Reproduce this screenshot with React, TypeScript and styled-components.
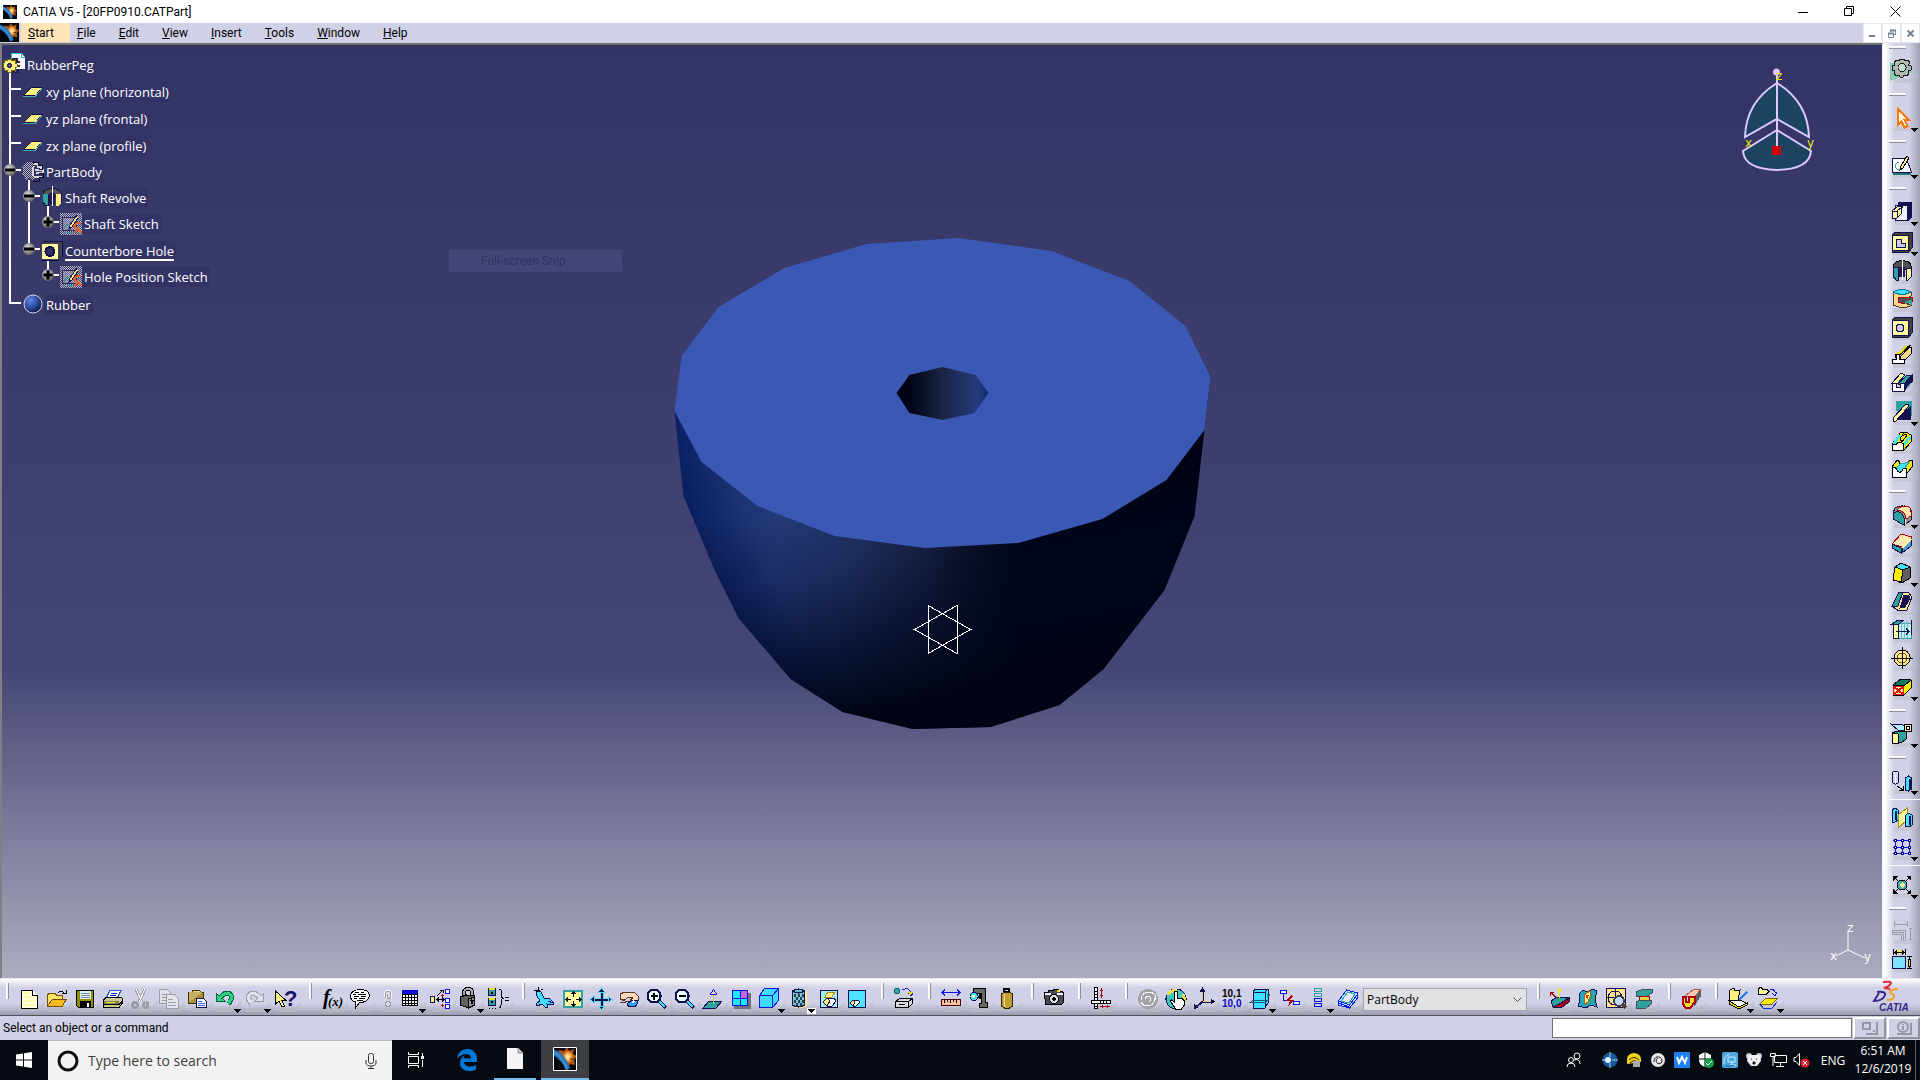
import React from 'react';
import styled, { createGlobalStyle } from 'styled-components';

const GlobalStyle = createGlobalStyle`
  *, *::before, *::after { box-sizing: border-box; }
  body { margin: 0; font-family: "Open Sans", "Noto Sans", sans-serif; font-size: 12px; color: #000; }
  button, input, select { font: inherit; color: inherit; margin: 0; }
  button { padding: 0; border: 0; background: none; cursor: default; }
  ul { list-style: none; margin: 0; padding: 0; }
  svg { display: block; }
`;

const chromeFont = 'Roboto, "Open Sans", sans-serif';

/* ---------- icon data: each layer is a path or a short label ---------- */

type PathLayer = [d: string, fill?: string, stroke?: string, width?: number];
type LabelLayer = { t: string; x: number; y: number; s: number; c: string; i?: boolean; serif?: boolean };
type Layer = PathLayer | LabelLayer;

const N = '#14104f';
const Y = '#fffa9c';
const S = '#ffee80';
const T = '#30a0a0';
const C = '#40e0ff';
const K = '#000';
const W = '#fff';
const G = '#9c9ca4';
const D = '#505050';
const R = '#a80010';
const B = '#1010e0';

const ICONS: Record<string, Layer[]> = {
  new: [['M2.5 1.5h11l5 5v13h-16z', '#ffffe0', K], ['M13.5 1.5v5h5', W, K], ['M4 4h7M4 8h12M4 12h12M4 16h12', 'none', '#fbfba8', 2]],
  open: [['M.5 17V6l2-2h5l2 2h6v4', '#ffe060', '#705000'], ['M.5 17l5-7h14l-4 7z', '#ffb820', '#705000'], ['M11 4q3-4 6 0M15 4h4V1', 'none', K]],
  save: [['M1.5 1.5h17v17h-15l-2-2z', '#909000', K], ['M5 2h11v8H5z', '#e0f0ff'], ['M6 4h9M6 6h9M6 8h9', 'none', '#7090b0'], ['M5 12h11v7H5z', K], ['M12 14h2v4h-2z', W]],
  print: [['M7 1.5h11l-4 8H3z', W, '#3060c0'], ['M8 4h6M7 6h6M6 8h6', 'none', B], ['M.5 11l3-3h15l1 2v4l-3 4H.5z', '#c8c890', K], ['M1 12h15v3H1z', '#808050'], ['M1 15.5h15l3-3', 'none', K], ['M3 13h9v1H3z', '#f0f020']],
  cut: [['M5 0l6 13M14 0L8 13', 'none', G, 3], ['M5 0l6 13M14 0L8 13', 'none', W, 1], ['M4 13.5a2.5 2.5 0 1 0 .1 0M14.5 13.5a2.5 2.5 0 1 0 .1 0', 'none', G, 3]],
  copy: [['M.5.5h8l3 3v11H.5z', '#e0e0ea', G], ['M7.5 5.5h8l4 4v10h-12z', '#e4e4ee', G], ['M3 5h4M3 8h4M3 11h4M9 10h5M9 13h8M9 16h8', 'none', G]],
  paste: [['M1.5 3.5h15v11h-15z', '#a88c40', '#403000'], ['M5 4.5V2l2-1h4l2 1v2.5z', '#e8e080', '#403000'], ['M2 13l13-9v-1H2z', '#c8b060'], ['M9.5 9.5h7l3 3v6h-10z', W, N], ['M11 12h4M11 14h7M11 16h7', 'none', '#3060e0']],
  undo: [['M5 9q5-7 10-4 4 4-2 10', 'none', '#006840', 5], ['M1.5 4.500v8h9z', '#30d080', '#006840'], ['M5 9q5-7 10-4 4 4-2 9', 'none', '#30d080', 3]],
  redo: [['M15 9q-5-7-10-4-4 4 2 10', 'none', G, 5], ['M18.5 4.500v8h-9z', '#e0e0ee', G], ['M15 9q-5-7-10-4-4 4 2 9', 'none', '#e0e0ee', 3]],
  help: [['M.5 2v13l3.5-3 3 6 2.5-1-3-6h4z', S, K], { t: '?', x: 9, y: 17, s: 22, c: '#18106c' }],
  fx: [{ t: 'f', x: 1, y: 15, s: 21, c: K, i: true, serif: true }, { t: '(x)', x: 6, y: 17, s: 13, c: K, i: true, serif: true }],
  comment: [['M10 .5q9 0 9.500 6q-1 7-10 7l-4 5.500v-6q-5-1-5-6q.5-6 9.500-6.500z', W, K], ['M5 3h4M11 3h3M3 5h3M8 5h8M4 7h5M11 7h5M4 9h3M9 9h6M7 11h6', 'none', K]],
  link: [['M7.5 8V4q3-4 5 0v4h-3V5', 'none', W, 3], ['M7.5 9V3.5q2.500-3 5 0V9h-3V6M10 12.5a2.500 2.500 0 1 0 .1 0', '#d8d8e8', G, 1]],
  table: [['M2 1h16v5H2z', '#0808d8'], ['M2.5 5.5h15v11h-15z', W, K], ['M2 8.5h16M2 11.5h16M2 14.5h16M5.5 6v11M8.5 6v11M11.5 6v11M14.5 6v11', 'none', K]],
  relations: [['M.5 7.5h4v6h-4z', S, N], ['M15.5.5h4v4h-4zM15.5 9.5h4v4h-4zM15.5 15.5h4v4h-4z', W, B], ['M7 7l6-6m-3 0h3v3M7 10.5h7m-2-2l2 2-2 2M9 8.5l-2 2 2 2', 'none', K], ['M11 6.5h3M12.5 5v3M11 16.5h3M12.5 15v3', 'none', R]],
  lock: [['M6 8V3q1-3.5 4-3.500 4 .5 4 3.500v5', 'none', K, 4], ['M6 8V3q1-3 4-3 4 0 4 3v5', 'none', '#b0b0b0', 2], ['M2.5 8l6-2 8 1v9l-6 3-8-3z', '#606060', K], ['M10.5 10l6-2v8l-6 3z', '#989898', K], ['M12.5 11l2 1-1 3', 'none', K, 2]],
  braces: [['M.5-.5h7v7h-7zM.5 9h7v7h-7z', T, N], ['M1 0h6M1 9.5h6', 'none', '#e8e800', 2], ['M3 3h2v2H3zM3 12h2v2H3z', K], ['M11 0q3 0 2 4v4l2 1.500-2 1.500v5q0 3-2 3M17 8h4M17 11h4M1 19h1M4 19h1M7 19h1', 'none', K]],
  fly: [['M1 2l5 1 3 6 6 1 4 4-1 2-6-1 1 3-2 1-4-4-5 2-1-2 4-3-3-5z', C, N], ['M-1 1h6M3-2v4M6 1l2-1', 'none', K], ['M13 12l5 2', 'none', B]],
  fit: [['M1 2h18v16H1z', Y, T, 2], ['M10.5 3v5m-2-3l2-2 2 2M10.5 17v-5m-2 3l2 2 2-2M3 10.5h5M5 8.500l-2 2 2 2M18 10.500h-5M16 8.500l2 2-2 2', 'none', K, 1]],
  pan: [['M10.5 1v18M1 10.500h18', 'none', '#60d8f0', 4], ['M10.5 1v18M1 10.500h18', 'none', N, 2], ['M10.500-1l3.500 4H7zM10.500 21l3.500-4H7zM-1 10.500l4-3.500v7zM21 10.500l-4-3.500v7z', N, '#60d8f0']],
  rotate: [['M1 5l5-2h9l4 4v5l-5 1-3-2 3-2-4-1-5 3-3-1z', '#ffd8c0', '#603020'], ['M1 10l5 2h7l3-1', 'none', '#603020'], ['M8 15l4-3 7-1q0 6-5 7-5 0-6-3z', '#30a0ff', N], ['M1 13l6 1', 'none', '#603020'], ['M13 14l2-2', 'none', W, 2]],
  zoomIn: [['M11 11l8 8', 'none', N, 4], ['M12 12l6 6', 'none', C, 2], ['M7 .5a6.5 6.5 0 1 0 .1 0z', '#e8ffff', N, 2], ['M3.5 7h7M7 3.5v7', 'none', K, 2]],
  zoomOut: [['M11 11l8 8', 'none', N, 4], ['M12 12l6 6', 'none', C, 2], ['M7 .5a6.5 6.5 0 1 0 .1 0z', '#e8ffff', N, 2], ['M3.5 7h7', 'none', K, 2]],
  normal: [['M0 19l6-7h13l-6 7z', T, N], ['M10.5 15V4', 'none', '#e8c800'], ['M7.5 5l3-4.500 3 4.500z', '#e0e0ff', B]],
  multi: [['M3 4h17v16H3z', '#70707c'], ['M1.5 1.5h15v15h-15z', '#20e8ff', B], ['M9 2h7v7H9z', '#c868d8'], ['M9 2v14M2 9h14', 'none', B]],
  iso: [['M.5 6.5l5-7h14v12l-6 7h-13z', '#40dcff', B], ['M.5 6.5h13v12M13.5 6.5l6-7', 'none', B]],
  shading: [['M6 2h12v15l-5 2H6z', '#ffe890'], ['M3.5 2q6-4 12 0v14q-6 4-12 0z', '#80c8cc', N], ['M5 5h2v3H5zM9 5h2v3H9zM13 5h2v3h-2zM7 8h2v3H7zM11 8h2v3h-2zM5 11h2v3H5zM9 11h2v3H9zM13 11h2v3h-2zM7 14h2v3H7zM11 14h2v3h-2z', '#204058'], ['M3.5 2q6 4 12 0', '#50b8c0', N]],
  hide: [['M1.5 1.5h17v17h-17z', '#a0ecf4', N], ['M6 8l3-5h7l-3 5z', S, '#b09020'], ['M4 13l4-4h7l2 3-4 5H8z', W, N], ['M4 13l4-4 3 3-3 5z', S, N]],
  swap: [['M1.5 1.5h17v17h-17z', '#50e4ff', N], ['M3 14l3-3h5l2 2-4 4H6z', W, N], ['M3 14l3-3 2 2-2 4z', S, N]],
  sceneA: [['M3-1a3 3 0 1 0 .1 0z', T, '#106070'], ['M8 1q8-4 9 5m-3-2l3 3 2-3', 'none', '#1818d0'], ['M14 3h5l-3 4z', '#e8e000'], ['M1.5 12.5l4-3h13v5l-4 4h-13z', '#d8d8e0', K], ['M1.5 12.5h13v6M14.5 12.5l4-3M5 15h6', 'none', K]],
  measure: [['M1 3.5h18M4 .5l-3 3 3 3M16 .5l3 3-3 3', 'none', B], ['M.5 10.5h19v6H.5z', '#ffc0a0', '#500000'], ['M3.5 11v3M6.5 11v2M9.5 11v3M12.5 11v2M15.5 11v3', 'none', K]],
  clamp: [['M4.5-.5h12v14h2v5h-8v-4h2v-10h-8z', '#686868', K], ['M5 3.500a4 4 0 1 0 .1 0z', C, N], ['M3 6h3v3H3z', Y], ['M9 7.500h3M11 5v5', 'none', K, 2]],
  weight: [['M7 0h5v3H7z', 'none', K, 2], ['M4.5 5l3-2h5l3 2v12l-3 2h-5l-3-2z', '#c0a030', '#302000'], ['M7 5v13', 'none', '#f0e0a0']],
  camera: [['M.5 3.5h4v-2h4l2-1h4l1 2h3l1 2v9l-2 2h-16z', '#484858', K], ['M1 4h6v2H1zM13 4h6v2h-6z', '#f0f0f8'], ['M10 5.5a4.500 4.500 0 1 0 .1 0z', '#e0e0e0', K, 1], ['M10 8a2 2 0 1 0 .1 0z', K], ['M13 1h3v2h-3z', '#e8e800']],
  scale: [['M3.5-1.500h3v21h-3z', W, K], ['M.5 11.5h19v3H.5z', W, K], ['M4 2.500h2M4 5.500h2M4 8.500h2M9.5 14v-2M12.5 14v-2M15.5 14v-2M4 17.500h2', 'none', K], ['M10.500-1v10M9 1.500h3M9 6.500h3M9 17.500h10M11.500 16v3M16.500 16v3', 'none', R]],
  swirl: [['M10 0a10 10 0 1 0 .1 0z', '#a4a4a8'], ['M3 11q1-8 8-8 8 1 7 8M17 9q-1 8-8 8-4 0-6-4M7 10q2-4 5-2 2 2-1 5', 'none', W, 1]],
  touch: [['M10 0a10 10 0 1 0 .1 0z', '#40c8c0', N], ['M2 6q4-6 9-4M17 5q4 8-2 12', 'none', '#e8e040', 3], ['M8.5 3q2-2 3 0v6l5 1 2 2v4l-3 4h-6l-5-8 1-1 3 2z', W, K]],
  axis: [['M8 12.500h12M8.500 13V0M8 13l-7 6', 'none', N, 2], ['M9 12.500h9M8.500 12V3', 'none', '#e8c860'], ['M8.500-2l3 5h-6zM21 12.500l-4 3v-6zM0 20v-5l4 4z', N]],
  precision: [{ t: '10,1', x: 0, y: 8, s: 10, c: K }, { t: '10,0', x: 0, y: 18, s: 10, c: '#0808c0' }],
  section: [['M3 2l3-2h12v14l-3 5H3z', C, N], ['M3 3h12l3-3M15 3v15', 'none', N], ['M0 13.5l3-2h15l-3 2zM17 5l3 1-3 2', 'none', '#106070']],
  update: [['M.5 1.500h6v3h-6zM13.5 12.5h6v3h-6z', '#e0f0ff', B], ['M3.500 5v6h3', 'none', B], ['M11 6l-5 6h4l-2 6 6-7h-4l3-4z', R]],
  list: [['M6.5-.5h7v3h-7zM6.5 4.5h7v3h-7z', 'none', T], ['M6.5 9.5h7v3h-7zM6.5 14.5h7v3h-7z', 'none', B]],
  catalog: [['M.5 12l8-11 11 3v5l-8 10-11-3z', '#a8f0f8', B], ['M.5 12l11 4 8-11M1 14l10 4', 'none', B], ['M3 12l7-9 7 2-6 9z', '#e4e8ff', T]],
  pad2: [['M1 12l6-4h12l-6 5-3 6-7-1z', T, N], ['M11 14l8-5v4l-8 6-8-1z', R, N], ['M0 3l7 6M0 7V3h4', 'none', R], ['M9.500 9V0M7 3l2.500-3L12 3', 'none', '#f0e800', 1]],
  draft: [['M1 5l4-4 4 2 6-3 4 2-2 8 2 8-6-2-5 3-8-2 2-6z', '#20a8c0', N], ['M6 6l6-4 1 3-3 8-4 3z', Y, '#c06000'], ['M8 6h3l-2 6z', '#e03020'], ['M14 5l-2 10M16 6v8', 'none', '#20a040']],
  inspect: [['M.5-.5h19v19H.5z', '#ffe490', N], ['M9 2a7 7 0 1 0 .1 0zM9-1v18M0 8.5h16', 'none', N], ['M13 7a5 5 0 1 0 .1 0z', '#c0d8ff', '#404050', 2], ['M16 15l4 4', 'none', '#504030', 3]],
  beam: [['M2 3l7-3h9v4l-5 3H2z', '#30a0a0', '#405050'], ['M5 7h11l-1 5H5z', '#e8d040', R], ['M2 13l4-2h11v4l-5 4H2z', '#30a0a0', '#405050']],
  wall: [['M4 7L13 0h7L13 9z', '#ffc8b0', '#a06040'], ['M17 3l3-3v7l-7 11-1-5z', '#606060'], ['M1.5 7.5h3v5h3v-5h6v6l-4 5h-5l-3-4z', '#f8e020', R, 2]],
  sketchPad: [['M2 1l4-2 1 3 5-1-2 10H1z', S, K], ['M1 11.500h12l6 3-8 4z', W, K], ['M1 12l10 6 8-4v2l-8 4-10-5z', '#f0e000', K], ['M19 3l-8 8', 'none', '#2080f0', 2]],
  convert: [['M0-.5l3-1 2 2h4l2 2-3 3H0z', Y, K], ['M12 0q6 0 5 6m-3-2l3 3 2-4', 'none', B], ['M2 15l6-6h12l-6 6z', '#f8f000', '#806000'], ['M2 15l3 4h9l5-6', 'none', '#1030d0']],
  gear: [['M-2 2l24 10L-2 21z', '#88ccb4'], ['M8-1h4l1 2 3-1 2 3-2 2 3 1v4l-3 1 1 3-3 2-2-1-1 2H8l-1-2-3 1-2-3 1-2-3-1V6l3-1-1-3 3-2 2 1z', '#b0b8b0', '#181818'], ['M10 3.500a4 4 0 1 0 .1 0z', '#c8e0d4', '#181818']],
  pointer: [['M5.5.5v17l4-4 3 6 3-1.500-3-6h5z', '#fff8e8', '#ff7800', 2]],
  sketch: [['M.5 3.5h14l5 14H.5z', W, N], ['M1 18h18v2H1z', '#207878'], ['M7 7a4 4 0 1 0 3 7', 'none', T], ['M15 1L9 11l-1 4 3-2 6-10z', S, K]],
  pad: [['M6 0h14v16l-4 3H6z', N], ['M3.5 3.5h12v15h-12z', '#f0f0ff', N], ['M0 9l6-5h5l-2 3v5l-4 4H0z', Y, N], ['M0 9h5v7M5 9l5-4', 'none', N]],
  pocket: [['M0 3l3-3h17v16l-3 4H0z', '#404040', N], ['M.5 3.5h16v15H.5z', Y, N], ['M4 7h5v4h4v4H4z', '#c8c8e8', N]],
  shaft: [['M1 5q2-6 9-5 8-1 9 5v10l-4 2V8H6v11H4L1 15z', D, K], ['M1 6h5v13H4l-3-4z', T, N], ['M14 7h5v9l-3 3h-2z', Y, N], ['M7 6h6v10H7z', '#241c58'], ['M10.5-2v21', 'none', W, 1]],
  groove: [['M1 3q9-5 18 0v4l-4 2v6l5 1q-8 5-19 0z', '#ffd890', '#503820'], ['M1 3q9-5 18 0-9 5-18 0z', C, '#107090'], ['M6 8h14v5l-7 2-7-2z', '#585050', R], ['M13 14l6-2v4', 'none', T, 2]],
  hole: [['M0 3l3-3h17v16l-3 4H0z', '#404040', N], ['M.5 3.5h16v15H.5z', Y, N], ['M8 7a4 4 0 1 0 .1 0z', '#c8c8e8', N, 1]],
  rib: [['M8 17v-5L18 2h1v7l-9 9z', '#ffd890', K], ['M3 10q7-1 9-7l7-3-10 9-3 3H3z', '#808020', K], ['M4 9l5-2 5-6', 'none', '#f0e000', 2], ['M.5 18.5v-4h4V9.500h3v5h5v4z', W, K]],
  slot: [['M0 10L9 0l4 2L6 10z', Y, N], ['M6 11l9-9h4v3l-8 7z', T, N], ['M12 18V11l8-9v7z', N, N], ['M.5 10.5h4v4h4v-4h4v8H.5z', W, N], ['M14 16l5-6', 'none', T, 1]],
  stiffener: [['M4-1h16v15L4 9z', T], ['M19 3L5 18h14z', N], ['M1 16L14 2h2l1 2L4 19H1z', Y, N]],
  loft: [['M1 12L9 1h5l5 3v7l-7 8z', '#f8f000', K], ['M2 14q2-7 8-9 2-5 5-3', 'none', K, 1], ['M1 14L8 4M12 14l6-8', 'none', C, 3], ['M8 8q2-5 7-4l-5 7z', '#f8f000', K], ['M.5 19v-6q3 2 5-1 3-2 6 1v6z', W, K]],
  removeLoft: [['M0 8l5-7 3 2-2 6z', '#f0e800', K], ['M12 9l6-8h2v7l-8 10z', '#f0e800', K], ['M4 9q4 9 9 0l4-6-4 1-5 1z', C, T], ['M.5 8.5h3q4 9 8 1h3v9H.5z', W, K]],
  fillet: [['M3 3q9-5 16 2v10l-5 4L1 14V8z', '#909090', N], ['M1 8q8-4 11 5v7L1 14z', T, N], ['M5 5q5-6 12-3 3 3 2 9l-5 3q0-8-9-9z', '#ffe8a8', R], ['M13 14v5', 'none', Y, 1]],
  chamfer: [['M10 13l9-9v8l-9 7z', '#50a0d0', N], ['M0 10L9 0l11 3-10 10z', '#ffe8b0', R], ['M0 10l9 4v5l-9-5z', T, N], ['M10 14l9-9', 'none', Y, 2]],
  draftAngle: [['M3 4l6-4 9 4v11l-8 5-8-3z', '#606060', K], ['M3 4l6-4 9 4-7 3z', C, K], ['M3 4l8 3-2 12-8-2z', '#f8f000', K]],
  shell: [['M7 0h9l4 5-5 13-8 1-6-4z', '#ffe890', N], ['M7 0h4L6 14H0z', T, N], ['M12 3h4l2 3-5 9-5 1 1-3z', '#181050', N]],
  thickness: [['M6 3.500h13v15H6z', '#c0f0f4', T], ['M0 4l6-4h6l-5 4z', T, N], ['M1 4.500h5v14H1z', Y, N], ['M9.5 2v17M12.5 2v17M15.5 1v17', 'none', '#70b8c0'], ['M19.500 0v15', 'none', N], ['M4 11.5h13m-3-3l3 3-3 3', 'none', N, 1]],
  thread: [['M10 2a8 8 0 1 0 .1 0z', '#ffe890', K], ['M10 5a5 5 0 1 0 .1 0z', 'none', '#705010'], ['M10.5-1v22M-1 10.5h22', 'none', K]],
  removeFace: [['M1 8l8-6 10 1v8l-7 7H1z', '#f8f000', K], ['M1 8l8-6 10 1-7 6z', '#107868', K], ['M1.5 9.5h10v8h-10z', Y, '#e01010', 1], ['M2 10l9 7M11 10l-9 7', 'none', '#e01010', 2]],
  assemble: [['M0 9l5-2 9 0v8l-5 4-9-2z', T, K], ['M0 9l6 1v9H0z', Y, K], ['M-1 0l12 1 6 4-10 2z', '#b0f0ff', N], ['M12.5.5h7v7h-7z', '#f8e890', K], ['M14.5 2.5h3v3h-3z', W, K]],
  translate: [['M.5 1.5q3-3 6 0v10l-3 2-3-2z', 'none', N, 1], ['M2 1v2M5 1v2M3.5 4v8', 'none', W], ['M5 15l6 4m0-4v4H7', 'none', K], ['M13.5 7l3-2 3 2v11l-3 2-3-1z', C, N], ['M18 8v11', 'none', N, 2]],
  mirror: [['M0 2l3-2 3 2v10l-3 2H0z', C, N], ['M4 3v9', 'none', N, 2], ['M6 7l9-7v12l-9 8z', Y, '#a09000'], ['M13 8l3-3 4 2v10l-3 2-4-1z', C, N], ['M18 8v9', 'none', N, 2]],
  pattern: [['M3.5 2v16M10.5 2v16M17.5 2v16M1 3.5h18M1 10.5h18M1 16.5h18', 'none', B], ['M2.5 2.5h2v2h-2zM9.5 2.5h2v2h-2zM16.5 2.5h2v2h-2zM2.5 9.5h2v2h-2zM9.5 9.5h2v2h-2zM16.5 9.5h2v2h-2zM2.5 15.5h2v2h-2zM9.5 15.5h2v2h-2zM16.5 15.5h2v2h-2z', W, '#000080']],
  scaling: [['M2 2l16 16M18 2L2 18', 'none', K], ['M1 1h5L1 6zM19 1v5l-5-5zM19 19h-5l5-5zM1 19v-5l5 5z', K], ['M10 5a5 5 0 1 0 .1 0z', '#40b0b0', K], ['M10 7l3 3-3 3-3-3z', Y]],
  constraintOff: [['M2 3.5h13M2.5 0v6M15.5 0v6M17 7.5h3M17 18.5h3M18.5 8v10', 'none', '#9c9ca4'], ['M.5 9.5h13v10M.5 11.5h11v8M.5 13.5h9v6M.5 9v5', 'none', '#9c9ca4']],
  constraint: [['M3 1h9v4H3z', '#f0e860'], ['M1 3.5h13M1.5 0v6M13.5 0v6M5 1.500l-2 2 2 2M10 1.500l2 2-2 2', 'none', K], ['M.5 7.5h13v12H.5z', '#80e0ff', N], ['M15 7.5h5M15 19.5h5M17.5 8v12', 'none', K, 1], ['M16.5 10h2v7h-2z', '#f0e860', K]],
};

const IconSvg = styled.svg`
  width: 28px;
  height: 28px;
  overflow: visible;
  shape-rendering: crispEdges;
`;

const ToolGlyph = ({ name, menu, boxed }: { name: string; menu?: boolean; boxed?: boolean }) => (
  <IconSvg viewBox="-4 -4 28 28" aria-hidden>
    <path d="M3 19h17l6-7v5l-5 6H1z" fill="url(#stipple)" />
    {ICONS[name].map((l, i) =>
      Array.isArray(l) ? (
        <path key={i} d={l[0]} fill={l[1] ?? 'none'} stroke={l[2] ?? 'none'} strokeWidth={l[3] ?? 1} />
      ) : (
        <text key={i} x={l.x} y={l.y} fontSize={l.s} fill={l.c} fontStyle={l.i ? 'italic' : 'normal'} fontWeight={700}
          fontFamily={l.serif ? '"Liberation Serif", serif' : '"Liberation Sans", sans-serif'}>{l.t}</text>
      ),
    )}
    {boxed && <path d="M18 19h9v6h-9z" fill="#fff" />}
    {menu && <path d="M19 20h7l-3.5 4z" fill="#000" />}
  </IconSvg>
);

/* ---------- window frame ---------- */

const Shell = styled.div`
  min-height: 100vh;
  display: flex;
  flex-direction: column;
  background: #d0d0e6;
`;

const TitleBar = styled.header`
  height: 23px;
  background: #fff;
  display: flex;
  align-items: center;
  padding-left: 3px;
`;

const Title = styled.h1`
  margin: 0 auto 0 6px;
  font-family: ${chromeFont};
  font-size: 12px;
  line-height: 16px;
  font-weight: 400;
`;

const WindowButton = styled.button`
  width: 46px;
  height: 20px;
  display: grid;
  place-items: center;
`;

const WindowButtons = styled.div`
  display: flex;
  padding-right: 2px;
`;

const MenuBar = styled.nav`
  height: 20px;
  display: flex;
  align-items: stretch;
`;

const MenuItems = styled.div`
  display: flex;
  margin-left: 2px;
`;

const MenuItem = styled.button<{ $active?: boolean }>`
  padding: 1px 16px 0 7px;
  height: 19px;
  font-family: ${chromeFont};
  font-size: 12px;
  line-height: 18px;
  background: ${(p) => (p.$active ? '#ffe4b8' : 'transparent')};
  &::first-letter { text-decoration: underline; }
`;

const MdiGroup = styled.div`
  margin-left: auto;
  display: flex;
  background: #e8e8f4;
  gap: 2px;
  padding: 1px 1px 0 1px;
`;

const MdiButton = styled.button`
  width: 17px;
  height: 18px;
  background: #fff;
  display: grid;
  place-items: center;
`;

const Workspace = styled.main`
  flex: 1;
  display: flex;
`;

const Viewport = styled.section`
  flex: 1;
  min-width: 0;
  position: relative;
  border-top: 2px solid #70706c;
  border-left: 2px solid #808084;
  border-right: 1px solid #f4f4fa;
  padding: 7px 0 0 0;
  background: linear-gradient(#333366 0%, #3c3c6c 33%, #464676 67%, #626289 76%, #acacc0 100%);
`;

const Scene = styled.svg`
  position: absolute;
  inset: 0;
  width: 100%;
  height: 100%;
`;

const Compass = styled.svg`
  position: absolute;
  top: 19px;
  right: 65px;
  width: 80px;
  height: 112px;
`;

const AxisTriad = styled.svg`
  position: absolute;
  right: 10px;
  bottom: 12px;
  width: 46px;
  height: 46px;
`;

const GhostItem = styled.div`
  position: absolute;
  left: 447px;
  top: 205px;
  width: 173px;
  height: 22px;
  padding-left: 32px;
  background: #444678;
  color: #303060;
  font-family: ${chromeFont};
  font-size: 12px;
  line-height: 22px;
`;

/* ---------- specification tree ---------- */

const Tree = styled.div`
  position: relative;
  width: max-content;
  color: #fff;
  font-size: 13px;
`;

const TreeRow = styled.div<{ $tall?: boolean }>`
  height: ${(p) => (p.$tall ? 27 : 26)}px;
  display: flex;
  align-items: center;
`;

const TreeIcon = styled.svg`
  width: 22px;
  height: 22px;
  margin-left: 1px;
  overflow: visible;
  shape-rendering: crispEdges;
`;

const TreeLabel = styled.span<{ $current?: boolean }>`
  padding: 0 2px;
  line-height: 20px;
  border-radius: 3px;
  background: #333366;
  text-decoration: ${(p) => (p.$current ? 'underline' : 'none')};
  text-decoration-thickness: 2px;
  text-underline-offset: 3px;
`;

const Branches = styled.ul`
  padding-bottom: 1px;
`;

const Branch = styled.li`
  display: grid;
  grid-template-columns: 19px auto;
`;

const Rail = styled.div<{ $last?: boolean }>`
  padding-top: 5px;
  padding-left: 2px;
  background-image: linear-gradient(#fff, #fff), linear-gradient(#fff, #fff);
  background-repeat: no-repeat;
  background-position: 7px 0, 8px 10px;
  background-size: 2px ${(p) => (p.$last ? '12px' : '100%')}, 11px 2px;
`;

const Toggle = styled.button`
  display: block;
  width: 12px;
  height: 12px;
`;

const treeIcons: Record<string, React.ReactNode> = {
  plane: (<><path d="M1.5 14.5l8-8h11l-7 8z" fill="#ffee80" stroke="#141040" /><path d="M1 15.5h12l7-8" fill="none" stroke="#40b0a8" /></>),
  body: (<>
    <path d="M9 1h5l1 3h5v4h-2v3h3v4h-4l-2 4h-5l-2-2-3 2-2-4-2-2 1-4-1-3 3-2 1-3z" fill="#30305c" />
    <path d="M9 1h3v18H9l-2-2-3 2-2-4-2-2 1-4-1-3 3-2 1-3z" fill="url(#dots)" />
    <path d="M12 3h4v3h3v2M13 9h8v3h-7M12 16h7v-1M12 5q-3 5 0 11" stroke="#d8d8e0" strokeWidth="2" fill="none" />
    <path d="M11 1h5v3h4v4h-3M17 12h4v4h-4v4h-6" stroke="#08081c" fill="none" />
  </>),
  shaft: (<>
    <path d="M2 6q3-5 9-4 7-1 9 4v10l-4 3V8H7v10H4l-2-3z" fill="#555" stroke="#111140" />
    <path d="M2 7h5v11H5l-3-3z" fill="#30a0a0" /><path d="M15 7h5v9l-3 3h-2z" fill="#ffee80" />
    <path d="M8 6h6v11H8z" fill="#201858" /><path d="M11.5-1v20" stroke="#fff" />
  </>),
  hole: (<>
    <path d="M1 4l3-3h17v16l-3 3H1z" fill="#404050" stroke="#14104f" />
    <path d="M1 4h16v15H1z" fill="#fffa9c" /><circle cx="9" cy="11.5" r="4.5" fill="#30305f" stroke="#14104f" strokeWidth="2" />
  </>),
  sketch: (<>
    <path d="M0 0h22v22H0z" fill="url(#dots)" /><path d="M2.5 4.5h14v13h-14z" fill="none" stroke="#262658" />
    <path d="M3 5h13v12H3z" fill="#a0a0c0" fillOpacity="0.5" />
    <path d="M4 15l6-5M6 19h8" stroke="#309c9c" strokeWidth="1" /><path d="M17 2L10 12l-1 4 3-2 6-9" fill="#ffee80" stroke="#14104f" />
    <path d="M21 10h-4l-3 3 4 3-4 4M18 16l4 4" fill="none" stroke="#e06028" strokeWidth="2" />
  </>),
  material: (<circle cx="11" cy="10" r="9" fill="url(#ball)" stroke="#d8d8e0" shapeRendering="auto" />),
};

type Node = { label: string; icon: string; open?: boolean; current?: boolean; children?: Node[] };

const NODES: Node[] = [
  { label: 'xy plane (horizontal)', icon: 'plane' },
  { label: 'yz plane (frontal)', icon: 'plane' },
  { label: 'zx plane (profile)', icon: 'plane' },
  {
    label: 'PartBody', icon: 'body', open: true, children: [
      { label: 'Shaft Revolve', icon: 'shaft', open: true, children: [{ label: 'Shaft Sketch', icon: 'sketch', open: false }] },
      { label: 'Counterbore Hole', icon: 'hole', open: true, current: true, children: [{ label: 'Hole Position Sketch', icon: 'sketch', open: false }] },
    ],
  },
  { label: 'Rubber', icon: 'material' },
];

const TreeNodes = ({ nodes }: { nodes: Node[] }) => (
  <Branches>
    {nodes.map((n, i) => (
      <Branch key={n.label}>
        <Rail $last={i === nodes.length - 1}>
          {n.open !== undefined && (
            <Toggle aria-label={`${n.open ? 'Collapse' : 'Expand'} ${n.label}`}>
              <svg width="12" height="12" viewBox="0 0 12 12">
                <circle cx="6" cy="6" r="6" fill="url(#knob)" />
                <path d={n.open ? 'M1 6h10' : 'M1.5 6h9M6 1.5v9'} stroke="#000" strokeWidth="3" />
              </svg>
            </Toggle>
          )}
        </Rail>
        <div>
          <TreeRow $tall={n.icon === 'plane'}>
            <TreeIcon viewBox="0 0 22 22">
              {n.children && <path d="M7 19v6" stroke="#fff" strokeWidth="2" />}
              {treeIcons[n.icon]}
            </TreeIcon>
            <TreeLabel $current={n.current}>{n.label}</TreeLabel>
          </TreeRow>
          {n.children && <TreeNodes nodes={n.children} />}
        </div>
      </Branch>
    ))}
  </Branches>
);

/* ---------- toolbars ---------- */

const SideBar = styled.aside`
  width: 37px;
  padding-left: 3px;
  border-left: 2px solid #fff;
  background: linear-gradient(90deg, #fff 0, #d0d0e6 9px, #d0d0e6 24px, #9c9cb0 36px);
`;

const SideGrip = styled.div<{ $gap: number }>`
  height: ${(p) => p.$gap}px;
  display: flex;
  align-items: flex-end;
  padding: 0 0 7px 1px;
  &::after {
    content: "";
    width: 17px;
    height: 3px;
    border: solid;
    border-width: 1px 0;
    border-color: #fff #909098 #909098 #fff;
    background: #f4f4fa;
  }
`;

const SideRule = styled.div`
  height: 8px;
  padding: 3px 0 0 1px;
  &::after {
    content: "";
    display: block;
    height: 1px;
    background: #fff;
  }
`;

const ToolButton = styled.button<{ $extra?: boolean; $vertical?: boolean; $narrow?: boolean }>`
  display: block;
  flex: none;
  width: ${(p) => (p.$narrow ? 22 : p.$extra && !p.$vertical ? 30 : 28)}px;
  height: ${(p) => (p.$extra && p.$vertical ? 30 : 28)}px;
`;

const BottomBar = styled.div`
  height: 38px;
  border-top: 1px solid #e8e8e8;
  border-bottom: 1px solid #505058;
  padding: 6px 7px 0 0;
  display: flex;
  background: linear-gradient(#fff 0, #d0d0e6 9px, #d0d0e6 25px, #9c9cb0 36px);
`;

const Grip = styled.div`
  flex: none;
  width: 19px;
  height: 16px;
  padding-left: 10px;
  margin-top: -2px;
  &::after {
    content: "";
    display: block;
    width: 3px;
    height: 16px;
    border: solid;
    border-width: 0 1px;
    border-color: #fff #909098 #909098 #fff;
    background: #f4f4fa;
  }
`;

const FirstGrip = styled(Grip)`
  width: 15px;
  padding-left: 6px;
`;

const BodyPicker = styled.label`
  flex: none;
  width: 164px;
  height: 23px;
  margin: 3px 0 0 1px;
  border: 1px solid #a4a4a8;
  background: #e1e1e4;
  display: flex;
  align-items: center;
  padding-right: 4px;
`;

const BodySelect = styled.select`
  appearance: none;
  flex: 1;
  border: 0;
  background: transparent;
  padding: 0 3px;
  font-size: 12px;
  line-height: 20px;
`;

const Brand = styled.svg`
  margin: -5px 0 0 auto;
  width: 42px;
  height: 34px;
`;

type Tool = { n: string; label: string; menu?: boolean; boxed?: boolean; narrow?: boolean };
const t = (n: string, label: string, opt: Partial<Tool> = {}): Tool => ({ n, label, ...opt });
const m = { menu: true };

const BOTTOM: Tool[][] = [
  [t('new', 'New'), t('open', 'Open'), t('save', 'Save'), t('print', 'Quick Print'), t('cut', 'Cut'), t('copy', 'Copy'), t('paste', 'Paste'), t('undo', 'Undo', m), t('redo', 'Redo', m), t('help', "What's This?")],
  [t('fx', 'Formula'), t('comment', 'Comment'), t('link', 'Check', { narrow: true }), t('table', 'Design Table', m), t('relations', 'Relations'), t('lock', 'Lock', m), t('braces', 'Equivalent Dimensions')],
  [t('fly', 'Fly Mode'), t('fit', 'Fit All In'), t('pan', 'Pan'), t('rotate', 'Rotate'), t('zoomIn', 'Zoom In'), t('zoomOut', 'Zoom Out'), t('normal', 'Normal View'), t('multi', 'Create Multi-View'), t('iso', 'Isometric View', m), t('shading', 'Shading', { menu: true, boxed: true }), t('hide', 'Hide/Show'), t('swap', 'Swap Visible Space')],
  [t('sceneA', 'Position')],
  [t('measure', 'Measure Between'), t('clamp', 'Measure Item'), t('weight', 'Measure Inertia')],
  [t('camera', 'Capture')],
  [t('scale', 'Dimensions')],
  [t('swirl', 'Update All'), t('touch', 'Manual Update'), t('axis', 'Axis System'), t('precision', 'Mean Dimensions'), t('section', 'Section', m), t('update', 'Graph'), t('list', 'List', m), t('catalog', 'Catalog')],
  [t('pad2', 'Draft Analysis'), t('draft', 'Curvature Analysis'), t('inspect', 'Tap Analysis'), t('beam', 'Wall Analysis')],
  [t('wall', 'Apply Material')],
  [t('sketchPad', 'Annotation', m), t('convert', 'Power Copy', m)],
];

type SideItem = { gap: number } | 'rule' | Tool;
const SIDE: SideItem[] = [
  { gap: 13 }, t('gear', 'Workbench'),
  { gap: 19 }, t('pointer', 'Select', m),
  { gap: 17 }, t('sketch', 'Sketch', m),
  { gap: 17 }, t('pad', 'Pad', m), t('pocket', 'Pocket', m), t('shaft', 'Shaft'), t('groove', 'Groove'), t('hole', 'Hole'), t('rib', 'Rib'), t('slot', 'Slot'), t('stiffener', 'Stiffener', m), t('loft', 'Multi-sections Solid'), t('removeLoft', 'Removed Solid'),
  { gap: 17 }, t('fillet', 'Edge Fillet', m), t('chamfer', 'Chamfer'), t('draftAngle', 'Draft Angle', m), t('shell', 'Shell'), t('thickness', 'Thickness'), t('thread', 'Thread'), t('removeFace', 'Remove Face', m),
  { gap: 17 }, t('assemble', 'Assemble', m),
  { gap: 17 }, t('translate', 'Translation', m),
  'rule', t('mirror', 'Mirror'), t('pattern', 'Rectangular Pattern', m),
  'rule', t('scaling', 'Scaling', m),
  { gap: 17 }, t('constraintOff', 'Constraints Dialog'), t('constraint', 'Constraint'),
];

/* ---------- status line ---------- */

const StatusBar = styled.div`
  height: 24px;
  display: flex;
  align-items: center;
  font-family: ${chromeFont};
  font-size: 12px;
  padding-left: 3px;
`;

const CommandInput = styled.input`
  margin-left: auto;
  width: 300px;
  height: 20px;
  border: 1px solid #707074;
  background: #fff;
  padding: 0 4px;
`;

const StatusButton = styled.button`
  width: 33px;
  height: 22px;
  margin-left: 1px;
  display: grid;
  place-items: center;
  background: #d0d0e6;
  border: solid;
  border-width: 2px;
  border-color: #fff #909098 #909098 #fff;
`;

/* ---------- desktop task bar ---------- */

const TaskBar = styled.footer`
  height: 40px;
  background: #060b12;
  color: #fff;
  display: flex;
`;

const TaskButton = styled.button<{ $w: number; $state?: 'running' | 'active' }>`
  width: ${(p) => p.$w}px;
  display: grid;
  place-items: center;
  border: solid #76b9ed;
  border-width: 0 0 ${(p) => (p.$state ? 2 : 0)}px 0;
  background: ${(p) => (p.$state === 'active' ? '#3c3e43' : 'transparent')};
`;

const TaskGroup = styled.div`
  display: flex;
  gap: 5px;
`;

const SearchBox = styled.label`
  width: 344px;
  display: flex;
  align-items: center;
  padding: 0 12px 0 9px;
  background: #f2f2f2;
  border-top: 1px solid #b8b8c0;
`;

const SearchInput = styled.input`
  flex: 1;
  min-width: 0;
  border: 0;
  outline: 0;
  background: transparent;
  padding: 0 0 0 9px;
  font-size: 14px;
  &::placeholder { color: #404040; opacity: 1; }
`;

const Tray = styled.div`
  margin-left: auto;
  display: flex;
  align-items: center;
`;

const TrayButton = styled.button<{ $w?: number }>`
  width: ${(p) => p.$w ?? 24}px;
  height: 40px;
  display: grid;
  place-items: center;
`;

const Language = styled.button`
  width: 38px;
  font-size: 12px;
  color: #fff;
`;

const Clock = styled.time`
  width: 62px;
  margin-right: 1px;
  text-align: center;
  font-size: 12px;
  line-height: 18px;
`;

const ShowDesktop = styled.button`
  width: 5px;
  height: 40px;
  border-left: 1px solid #5c6068;
`;

const AppLogo = ({ size, framed }: { size: number; framed?: boolean }) => (
  <svg width={size} height={size} viewBox="0 0 24 24" aria-hidden>
    <path d="M0 0h24v24H0z" fill="#08080c" />
    <path d="M5 3l6 1 3-4 2 4 5-2-1 5 4 2-3 4 1 5-5-1-3 4-2-6z" fill="#b05818" />
    <ellipse cx="15" cy="10" rx="7" ry="8" fill="url(#glow)" />
    <path d="M17 12h3" stroke="#301000" />
    <path d="M0 2q12 4 17 19l-4 3Q10 14 0 8z" fill="#2878c0" />
    <path d="M0 5q10 4 14 17" fill="none" stroke="#58acdc" strokeWidth="1" />
    {framed && <path d="M.5.5h23v23H.5z" fill="none" stroke="#fff" strokeWidth="1" />}
  </svg>
);

const DefsSvg = styled.svg`
  position: absolute;
  width: 0;
  height: 0;
`;

const Defs = () => (
  <DefsSvg aria-hidden>
    <defs>
      <pattern id="stipple" width="2" height="2" patternUnits="userSpaceOnUse"><path d="M0 0h1v1H0zM1 1h1v1H1z" fill="#bcbcc6" /></pattern>
      <pattern id="dots" width="2" height="2" patternUnits="userSpaceOnUse"><path d="M0 0h1v1H0zM1 1h1v1H1z" fill="#b8b8c8" /></pattern>
      <radialGradient id="ball" cx="0.35" cy="0.3" r="0.75"><stop offset="0" stopColor="#6088e8" /><stop offset="0.5" stopColor="#3050a8" /><stop offset="1" stopColor="#0c1440" /></radialGradient>
      <radialGradient id="knob" cx="0.4" cy="0.35" r="0.7"><stop offset="0" stopColor="#d8d8d8" /><stop offset="1" stopColor="#5c5c5c" /></radialGradient>
      <radialGradient id="glow"><stop offset="0" stopColor="#fff0c0" /><stop offset="0.4" stopColor="#f8b860" /><stop offset="0.7" stopColor="#d87820" stopOpacity="0.8" /><stop offset="1" stopColor="#401000" stopOpacity="0" /></radialGradient>
    </defs>
  </DefsSvg>
);

const Model = () => (
  <Scene viewBox="2 45 1879 933" preserveAspectRatio="xMidYMid meet" role="img" aria-label="RubberPeg part">
    <defs>
      <linearGradient id="side" gradientUnits="userSpaceOnUse" x1="674" y1="0" x2="1018" y2="0">
        <stop offset="0" stopColor="#0c2468" /><stop offset="0.1" stopColor="#172c6c" /><stop offset="0.3" stopColor="#243a78" />
        <stop offset="0.5" stopColor="#24376c" /><stop offset="0.73" stopColor="#1c2546" /><stop offset="0.86" stopColor="#0c1226" /><stop offset="1" stopColor="#000414" />
      </linearGradient>
      <linearGradient id="fall" gradientUnits="userSpaceOnUse" x1="845" y1="500" x2="885" y2="710">
        <stop offset="0" stopColor="#000414" stopOpacity="0" /><stop offset="0.3" stopColor="#000624" stopOpacity="0.24" />
        <stop offset="0.7" stopColor="#00051c" stopOpacity="0.7" /><stop offset="1" stopColor="#000414" />
      </linearGradient>
      <linearGradient id="rim" gradientUnits="userSpaceOnUse" x1="705" y1="585" x2="765" y2="555">
        <stop offset="0" stopColor="#001248" stopOpacity="0.6" /><stop offset="1" stopColor="#001a60" stopOpacity="0" />
      </linearGradient>
      <linearGradient id="bore"><stop offset="0" stopColor="#000414" /><stop offset="0.15" stopColor="#000414" /><stop offset="0.5" stopColor="#1a2444" /><stop offset="0.88" stopColor="#243a7c" /><stop offset="1" stopColor="#142a6c" /></linearGradient>
      <path id="solid" d="M674 411L683 496 715 572 738 618 790 679 842 712 912 729 990 727 1059 705 1103 669 1164 590 1194 516 1204 430 1210 377 950 380z" />
    </defs>
    <use href="#solid" fill="url(#side)" />
    <use href="#solid" fill="url(#rim)" />
    <use href="#solid" fill="url(#fall)" />
    <path fill="#3a58b4" d="M958 238L1051 251 1129 281 1185 326 1210 377 1204 430 1166 480 1102 519 1018 543 924 548 834 536 757 506 701 462 674 411 681 356 718 307 784 268 866 244z" />
    <path fill="url(#bore)" d="M942 367L975 375 988 393 974 413 942 420 909 413 896 393 909 375z" />
    <path fill="none" stroke="#fff" shapeRendering="crispEdges" d="M927.5 605.5V653.5L970 629.5zM956.5 605.5V653.5L914 629.5z" />
  </Scene>
);

export default function App() {
  return (
    <Shell>
      <GlobalStyle />
      <Defs />
      <TitleBar>
        <AppLogo size={14} />
        <Title>CATIA V5 - [20FP0910.CATPart]</Title>
        <WindowButtons>
          <WindowButton aria-label="Minimize"><svg width="11" height="11"><path d="M0 6.5h10" stroke="#000" /></svg></WindowButton>
          <WindowButton aria-label="Restore"><svg width="11" height="11"><path d="M.5 2.5h7v7h-7zM2.5 2V.5h7v7H8" fill="none" stroke="#000" /></svg></WindowButton>
          <WindowButton aria-label="Close"><svg width="11" height="11"><path d="M.5.5l10 10M10.5.5l-10 10" stroke="#000" /></svg></WindowButton>
        </WindowButtons>
      </TitleBar>
      <MenuBar>
        <AppLogo size={19} />
        <MenuItems>
          {['Start', 'File', 'Edit', 'View', 'Insert', 'Tools', 'Window', 'Help'].map((x) => (
            <MenuItem key={x} $active={x === 'Start'}>{x}</MenuItem>
          ))}
        </MenuItems>
        <MdiGroup>
          <MdiButton aria-label="Minimize document"><svg width="9" height="9"><path d="M1 7h6" stroke="#76849a" strokeWidth="2" /></svg></MdiButton>
          <MdiButton aria-label="Restore document"><svg width="9" height="9"><path d="M1.5 4.5h5v4h-5zM3.5 3V1.5h5v4H7" fill="none" stroke="#76849a" /><path d="M1 4.5h6M3 1.5h6" stroke="#76849a" strokeWidth="2" /></svg></MdiButton>
          <MdiButton aria-label="Close document"><svg width="9" height="9"><path d="M1.5 1.5l6 6M7.5 1.5l-6 6" stroke="#76849a" strokeWidth="2" /></svg></MdiButton>
        </MdiGroup>
      </MenuBar>

      <Workspace>
        <Viewport>
          <Model />
          <Tree>
            <TreeRow>
              <TreeIcon viewBox="0 0 22 22">
                <path d="M7 18v8" stroke="#fff" strokeWidth="2" />
                <path d="M8-1h10l4 4v12H8z" fill="#fff" /><path d="M8 5V-1h10l4 4h-4v-4" fill="none" stroke="#20c0d0" />
                <path d="M9 5h5v3h3M10 18h5v-3M14 12h3" stroke="#202048" strokeWidth="2" fill="none" />
                <path d="M5 5h3l1 2 3-1v3l2 1v3l-2 1v3l-3-1-1 2H5l-1-2-3 1v-3l-1-1v-3l1-1V6l3 1z" fill="#ffee80" stroke="#786810" />
                <circle cx="6.5" cy="11.5" r="2.5" fill="#30305c" /><circle cx="6.5" cy="11.5" r="1" fill="#ffee80" />
              </TreeIcon>
              <TreeLabel>RubberPeg</TreeLabel>
            </TreeRow>
            <TreeNodes nodes={NODES} />
          </Tree>
          <GhostItem>Full-screen Snip</GhostItem>
          <Compass viewBox="1737 64 80 112" aria-hidden>
            <g fill="#1c4462" stroke="#dcc8ff" strokeWidth="2">
              <path d="M1777 83Q1746 102 1745 137L1777 119L1809 137Q1808 102 1777 83z" />
              <path d="M1777 130L1743 151Q1744 169 1777 170Q1810 169 1811 151z" />
              <path d="M1777 72V150" />
            </g>
            <circle cx="1776.5" cy="72" r="3.5" fill="#dcc8ff" />
            <path d="M1772 146h9v9h-9z" fill="#d00000" />
            <g fill="#e8e800" fontSize="12" fontFamily="DejaVu Sans, sans-serif"><text x="1776" y="80">z</text><text x="1745" y="147">x</text><text x="1807" y="147">y</text></g>
          </Compass>
          <AxisTriad viewBox="1826 920 46 46" aria-hidden>
            <path d="M1848 932v18l-12 6M1848 950l17 8" fill="none" stroke="#fff" />
            <g fill="#fff" fontSize="12" fontFamily="DejaVu Sans, sans-serif"><text x="1847" y="932">z</text><text x="1830" y="960">x</text><text x="1864" y="961">y</text></g>
          </AxisTriad>
        </Viewport>
        <SideBar aria-label="Part Design tools">
          {SIDE.map((item, i) => {
            if (item === 'rule') return <SideRule key={i} />;
            if ('gap' in item) return <SideGrip key={i} $gap={item.gap} />;
            return (
              <ToolButton key={i} $vertical $extra={item.menu} aria-label={item.label}>
                <ToolGlyph name={item.n} menu={item.menu} />
              </ToolButton>
            );
          })}
        </SideBar>
      </Workspace>

      <BottomBar>
        {BOTTOM.map((group, g) => (
          <React.Fragment key={g}>
            {g === 0 ? <FirstGrip /> : <Grip />}
            {group.map((item) => (
              <ToolButton key={item.n} $extra={item.menu} $narrow={item.narrow} aria-label={item.label}>
                <ToolGlyph name={item.n} menu={item.menu} boxed={item.boxed} />
              </ToolButton>
            ))}
            {g === 7 && (
              <BodyPicker>
                <BodySelect aria-label="In work object"><option>PartBody</option></BodySelect>
                <svg width="9" height="6"><path d="M.5.5l4 4 4-4" fill="none" stroke="#505050" /></svg>
              </BodyPicker>
            )}
          </React.Fragment>
        ))}
        <Brand viewBox="0 0 42 34" aria-label="Dassault Systèmes CATIA">
          <path d="M12 2q8-1 8 1-1 3-7 5 6 0 5 2" fill="none" stroke="#e02838" strokeWidth="2" />
          <path d="M6 12q9-1 8 3-2 6-11 6l5-8" fill="none" stroke="#38288c" strokeWidth="2" />
          <path d="M27 9q-7 0-8 3 0 1 4 3 1 5-7 5" fill="none" stroke="#f0a020" strokeWidth="2" />
          <text x="8" y="31" fontSize="10" fontWeight="700" fontStyle="italic" fill="#38288c" fontFamily="Liberation Sans, sans-serif">CATIA</text>
        </Brand>
      </BottomBar>

      <StatusBar>
        <span>Select an object or a command</span>
        <CommandInput aria-label="Power input" />
        <StatusButton aria-label="Dialog"><svg width="18" height="14"><path d="M2 2h7v6H2zM12 10h2M16 1v12H5" fill="none" stroke="#9898a4" strokeWidth="2" /></svg></StatusButton>
        <StatusButton aria-label="Information"><svg width="18" height="14"><circle cx="8" cy="6" r="5" fill="none" stroke="#9898a4" strokeWidth="2" /><path d="M8 3v1M8 5v4M2 13h14V2" fill="none" stroke="#9898a4" strokeWidth="2" /></svg></StatusButton>
      </StatusBar>

      <TaskBar>
        <TaskButton $w={48} aria-label="Start menu">
          <svg width="16" height="16"><path d="M0 2.5L7 1.5V7.5H0zM8 1.3L16 0V7.5H8zM0 8.5H7V14.5L0 13.5zM8 8.5H16V16L8 14.7z" fill="#fff" /></svg>
        </TaskButton>
        <SearchBox>
          <svg width="22" height="22"><circle cx="11" cy="11" r="9" fill="none" stroke="#101010" strokeWidth="3" /></svg>
          <SearchInput placeholder="Type here to search" aria-label="Search" />
          <svg width="17" height="18" fill="none" stroke="#303030"><rect x="5.5" y="1.5" width="5" height="10" rx="2" /><path d="M3 8v3q0 3 5 3t5-3V8M8 14v3M5 16.5h6" /></svg>
        </SearchBox>
        <TaskButton $w={48} aria-label="Task view">
          <svg width="18" height="16" fill="none" stroke="#fff"><path d="M1.5 0v2.5h10V0M1.5 4.5h10v7h-10zM1.5 16v-2.5h10V16M15.5 1v3M15.5 8v7" /><path d="M14 4h3v3h-3z" fill="#fff" stroke="none" /></svg>
        </TaskButton>
        <TaskButton $w={54} aria-label="Edge">
          <svg width="20" height="22" viewBox="0 0 20 22"><path d="M0 9.5C1 3.5 5 0 10.5 0c6 0 9.5 4.5 9.5 10v3H7c.2 3 3 4.5 6.500 4.500 2 0 4-.5 5.500-1.500v4.500c-2 1-4 1.500-6.500 1.500C6.500 22 3 18.500 3 14c0-3.500 2-6.500 5-8-1 1-1.300 2-1.500 3.500h7.500C14 6.500 12.500 5 9.500 5 6 5 2.500 6.500 0 9.500z" fill="#0078d7" /></svg>
        </TaskButton>
        <TaskGroup>
          <TaskButton $w={42} $state="running" aria-label="Document">
            <svg width="16" height="22"><path d="M0 0h11l5 5v16H0z" fill="#f4f4f4" /><path d="M11 0v5h5" fill="#d0d0d0" stroke="#888" /></svg>
          </TaskButton>
          <TaskButton $w={48} $state="active" aria-label="CATIA V5"><AppLogo size={24} framed /></TaskButton>
        </TaskGroup>
        <Tray>
          <TrayButton $w={48} aria-label="People"><svg width="16" height="16" fill="none" stroke="#fff" strokeWidth="1"><circle cx="11" cy="4" r="3" /><circle cx="5" cy="8" r="2.5" /><path d="M1 15q0-4 4-4t4 4M8 8q6-2 6 4" /></svg></TrayButton>
          <TrayButton aria-label="Network agent"><svg width="16" height="16"><circle cx="8" cy="8" r="7.5" fill="#185898" /><path d="M0 8h6M10 8h6M8 0v5M8 11v5" stroke="#a0c8e8" strokeWidth="1" /><circle cx="6" cy="8" r="3" fill="#d8f0ff" /></svg></TrayButton>
          <TrayButton aria-label="Sync"><svg width="16" height="16"><path d="M1 12V7a7 6 0 0 1 14 0v3" fill="#f0d020" /><path d="M3 8q5-5 10 0M4 11q4-4 7-1" fill="none" stroke="#302800" /><path d="M7 9h7v6H7z" fill="#a8a8a8" /></svg></TrayButton>
          <TrayButton aria-label="Disc"><svg width="16" height="16"><circle cx="8" cy="8" r="7" fill="#e8e8e8" /><path d="M4 10a4 4 0 1 1 8-2 3 3 0 1 1-4-2" fill="none" stroke="#202020" strokeWidth="1" /></svg></TrayButton>
          <TrayButton aria-label="W app"><svg width="16" height="16"><path d="M0 0h16v16H0z" fill="#1e80f0" /><path d="M3 5l2 6 3-6 3 6 2-6" fill="none" stroke="#fff" strokeWidth="2" /></svg></TrayButton>
          <TrayButton aria-label="Security"><svg width="16" height="16"><path d="M1 3l6-3 6 3v5q-1 5-6 7Q1 13 1 8z" fill="#fff" /><path d="M7 0v15M1 7h12" stroke="#101010" /><circle cx="11" cy="11" r="5" fill="#18a050" /><path d="M8 11l2 2 4-4" fill="none" stroke="#fff" /></svg></TrayButton>
          <TrayButton aria-label="Graphics"><svg width="16" height="16"><rect width="16" height="16" rx="2" fill="#48a8e0" /><path d="M2 12q-1-8 6-10M6 5h7v5H6zM8 13h6M10 10v3" fill="none" stroke="#d8f0ff" /><path d="M3 14q5 1 9-1" stroke="#1060a0" fill="none" /></svg></TrayButton>
          <TrayButton aria-label="Bear"><svg width="16" height="16"><circle cx="3" cy="4" r="3" fill="#c8c8c8" /><circle cx="13" cy="4" r="3" fill="#c8c8c8" /><path d="M2 3h12l1 6-4 5H5L1 9z" fill="#f0f0f0" /><path d="M5 7h1M10 7h1M7 10h2v2H7z" stroke="#202020" /></svg></TrayButton>
          <TrayButton aria-label="Network"><svg width="17" height="16" fill="none" stroke="#fff"><path d="M4.5 3.5h12v7h-12zM10.5 11v3M6 14.5h8M.5 1.5h5v3h-5zM3 5v9" /></svg></TrayButton>
          <TrayButton aria-label="Volume muted"><svg width="18" height="16"><path d="M1 5.5h2l3.500-4v12L3 9.500H1z" fill="none" stroke="#fff" /><circle cx="12" cy="11" r="4.5" fill="#e02030" /><path d="M10 9l4 4M14 9l-4 4" stroke="#fff" /></svg></TrayButton>
          <Language>ENG</Language>
          <Clock>6:51 AM<br />12/6/2019</Clock>
          <ShowDesktop aria-label="Show desktop" />
        </Tray>
      </TaskBar>
    </Shell>
  );
}
